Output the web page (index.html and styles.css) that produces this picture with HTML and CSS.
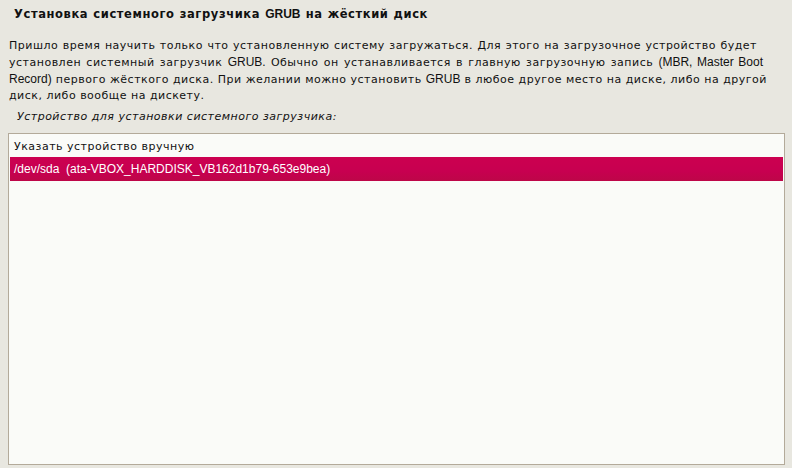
FILE: index.html
```html
<!DOCTYPE html>
<html lang="ru">
<head>
<meta charset="utf-8">
<link rel="stylesheet" href="styles.css">
</head>
<body>
<div class="page">
  <h1 class="title">Установка системного загрузчика <span class="lat">GRUB</span> на жёсткий диск</h1>
  <div class="desc">
    <span class="line l1">Пришло время научить только что установленную систему загружаться. Для этого на загрузочное устройство будет</span>
    <span class="line l2">установлен системный загрузчик <span class="lat">GRUB.</span> Обычно он устанавливается в главную загрузочную запись <span class="lat">(MBR, Master Boot</span></span>
    <span class="line l3"><span class="lat">Record)</span> первого жёсткого диска. При желании можно установить <span class="lat">GRUB</span> в любое другое место на диске, либо на другой</span>
    <span class="line">диск, либо вообще на дискету.</span>
  </div>
  <div class="label">Устройство для установки системного загрузчика:</div>
  <div class="list">
    <div class="row">Указать устройство вручную</div>
    <div class="row selected"><span class="lat">/dev/sda&nbsp; (ata-VBOX_HARDDISK_VB162d1b79-653e9bea)</span></div>
  </div>
</div>
</body>
</html>
```
FILE: styles.css
```css
html, body {
  margin: 0;
  padding: 0;
  background: #e8e7e0;
}
.page {
  width: 792px;
  height: 468px;
  display: flex;
  flex-direction: column;
  font-family: "DejaVu Sans", sans-serif;
  font-size: 11px;
  color: #111;
  letter-spacing: 0.5px;
  word-spacing: 0;
}
.lat {
  font-family: "Liberation Sans", Arial, sans-serif;
  letter-spacing: 0;
  word-spacing: 0;
  font-size: 12px;
}
.title {
  margin: 0;
  padding: 5px 0 0 14px;
  height: 19px;
  line-height: 18px;
  font-size: 11.5px;
  font-weight: bold;
  letter-spacing: 0.6px;
  word-spacing: 0.5px;
}
.title .lat {
  font-size: 12px;
  letter-spacing: 0;
}
.desc {
  margin-top: 14px;
  padding-left: 9px;
  line-height: 16px;
  white-space: nowrap;
}
.line {
  display: block;
}
.l1, .l2, .l3 {
  text-align: justify;
  text-align-last: justify;
}
.l1 { width: 748px; }
.l2 { width: 754px; }
.l3 { width: 758px; }
.label {
  margin-top: 5px;
  padding-left: 17px;
  height: 16px;
  line-height: 16px;
  font-style: italic;
}
.list {
  margin: 8px 0 0 8px;
  width: 773px;
  height: 328px;
  border: 1px solid #b3aa9a;
  background: #fafbf8;
  padding: 1px;
  box-sizing: content-box;
}
.row {
  height: 22px;
  line-height: 23px;
  padding-left: 4px;
  white-space: nowrap;
}
.row.selected {
  height: 24px;
  line-height: 24px;
  background: linear-gradient(#cc0050, #c70050 60%, #bd0648);
  color: #fff;
}
.row.selected .lat {
  font-size: 12px;
}
```
